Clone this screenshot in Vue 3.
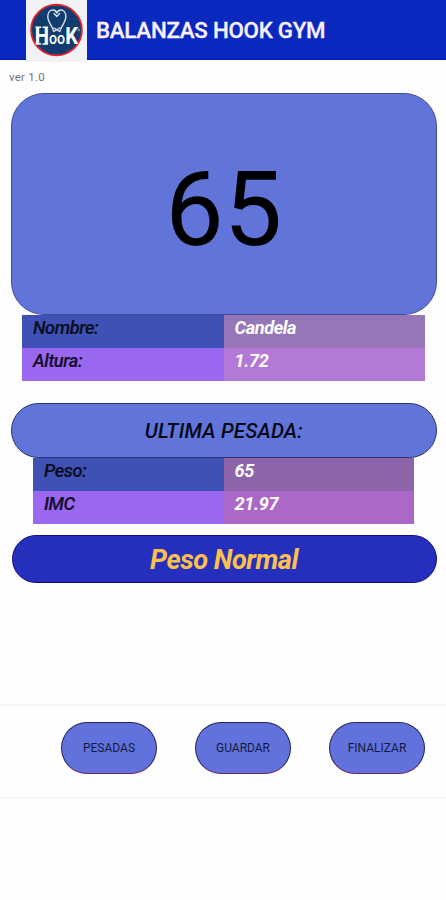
<script setup>
const person = [
  { label: 'Nombre:', value: 'Candela' },
  { label: 'Altura:', value: '1.72' },
]
const last = [
  { label: 'Peso:', value: '65' },
  { label: 'IMC', value: '21.97' },
]
const actions = ['PESADAS', 'GUARDAR', 'FINALIZAR']
</script>

<template>
  <div class="screen">
    <header class="bar">
      <svg class="logo" width="61" height="62" viewBox="0 0 61 62">
        <rect width="61" height="62" fill="#f2f1f3" />
        <circle cx="30.5" cy="30" r="25.4" fill="#123c70" stroke="#e5222c" stroke-width="1.8" />
        <path
          d="M27.5 31 C26.5 26 21.8 22.5 21.8 16.5 C21.8 12 24.6 10 27 10 C29 10 30.3 11.5 30.8 13 C31.5 11.2 33 10 35 10 C37.5 10 39.8 12.2 39.8 16.5 C39.8 22.5 35 26 34 31 M28 28 L33.5 31.5 M28 31.5 L33.5 28 M28 13.5 L30.8 16.5 L33.6 13.5"
          fill="none" stroke="#d5e0ea" stroke-width="1.4" stroke-linecap="round" stroke-linejoin="round"
        />
        <text class="brand" transform="translate(8.8 44) scale(.86 1)" fill="#fff"><tspan font-size="23.5">H</tspan><tspan class="small" font-size="16.5">oo</tspan><tspan font-size="23.5">K</tspan></text>
        <path d="M9.5 27.3h5.6M16.5 27.3h5.6M9.5 44h5.6M16.5 44h5.6" stroke="#fff" stroke-width="1.6" />
        <circle cx="52.8" cy="30" r="1" fill="none" stroke="#b6c6d8" stroke-width=".6" />
      </svg>
      <h1>BALANZAS HOOK GYM</h1>
    </header>
    <p class="version">ver 1.0</p>

    <section class="weight">65</section>
    <dl class="table person">
      <div v-for="row in person" :key="row.label" class="row">
        <dt>{{ row.label }}</dt>
        <dd>{{ row.value }}</dd>
      </div>
    </dl>

    <h2 class="heading">ULTIMA PESADA:</h2>
    <dl class="table last">
      <div v-for="row in last" :key="row.label" class="row">
        <dt>{{ row.label }}</dt>
        <dd>{{ row.value }}</dd>
      </div>
    </dl>

    <div class="result">Peso Normal</div>

    <nav class="actions">
      <button v-for="a in actions" :key="a" type="button">{{ a }}</button>
    </nav>
  </div>
</template>

<style>
body {
  background: #fefefe;
}
</style>

<style scoped>
.screen {
  box-sizing: border-box;
  width: 446px;
  height: 900px;
  display: flex;
  flex-direction: column;
  overflow: hidden;
  background: #fefefe;
  font-family: Roboto, "Liberation Sans", sans-serif;
}
.bar {
  flex: none;
  box-sizing: border-box;
  height: 60px;
  display: flex;
  align-items: flex-start;
  padding-left: 25.5px;
  background: #0928bd;
  border-bottom: 1px solid #0712a8;
}
.logo {
  flex: none;
  display: block;
}
.brand {
  font-weight: 700;
}
.small {
  font-weight: 500;
}
h1 {
  margin: 0 0 0 9.5px;
  font-size: 22.3px;
  font-weight: 500;
  line-height: 61px;
  letter-spacing: -0.25px;
  color: #f8efff;
  -webkit-text-stroke: 0.3px #f8efff;
  white-space: nowrap;
}
.version {
  flex: none;
  margin: 0;
  height: 33px;
  padding-left: 9px;
  font-size: 11.5px;
  letter-spacing: 0.25px;
  line-height: 35px;
  color: #77717a;
}
.weight {
  flex: none;
  box-sizing: border-box;
  height: 222px;
  margin: 0 9.5px 0 11px;
  border: 1px solid #414c99;
  border-radius: 33px;
  background: #6174da;
  color: #000;
  font-size: 104px;
  line-height: 232px;
  text-align: center;
}
.table {
  flex: none;
  margin: 0;
  font-size: 18.2px;
  letter-spacing: -0.4px;
  font-style: italic;
}
.row {
  display: grid;
  height: 33px;
  line-height: 26px;
}
.last .row:last-child {
  height: 32.5px;
}
dt {
  padding-left: 11px;
  background: #3f51b5;
  color: #090d20;
  font-weight: 500;
  -webkit-text-stroke: 0.2px #090d20;
}
dd {
  margin: 0;
  padding-left: 10.5px;
  color: #fff;
  font-weight: 700;
}
.row:last-child dt {
  background: #9a68f0;
  color: #180d2c;
}
.person {
  margin: 0 21px 0 22px;
}
.person .row {
  grid-template-columns: 202px 1fr;
}
.person dd {
  background: #9676b8;
}
.person .row:last-child dd {
  background: #b478d7;
}
.last {
  margin: 0 32px 0 33px;
}
.last .row {
  grid-template-columns: 191px 1fr;
}
.last dd {
  background: #8e64a9;
}
.last .row:last-child dd {
  background: #ac68c8;
}
.heading {
  flex: none;
  box-sizing: border-box;
  height: 55px;
  margin: 22px 9.5px 0 11px;
  border: 1px solid #29346f;
  border-radius: 28px;
  background: #6174da;
  color: #060918;
  font-size: 20.6px;
  letter-spacing: 0.15px;
  font-weight: 500;
  font-style: italic;
  line-height: 55px;
  text-align: center;
}
.result {
  flex: none;
  box-sizing: border-box;
  height: 48px;
  margin: 11px 9.5px 0 11.5px;
  border: 1px solid #190c83;
  border-radius: 24px;
  background: #2430bd;
  color: #fdc04c;
  font-size: 27.2px;
  letter-spacing: -0.5px;
  font-weight: 700;
  font-style: italic;
  line-height: 48px;
  text-align: center;
}
.actions {
  flex: none;
  box-sizing: border-box;
  height: 95px;
  margin-top: 121.5px;
  padding: 16px 21px 0 61px;
  display: flex;
  justify-content: space-between;
  border-top: 2px solid #f6f6f6;
  border-bottom: 2px solid #f8f8f8;
}
button {
  box-sizing: border-box;
  width: 96px;
  height: 52px;
  padding: 0;
  border: 1px solid #28265e;
  border-bottom-color: #6c2870;
  border-radius: 26px;
  background: #6272dc;
  color: #141b42;
  font-family: inherit;
  font-size: 12px;
  line-height: 50px;
  text-align: center;
}
</style>
